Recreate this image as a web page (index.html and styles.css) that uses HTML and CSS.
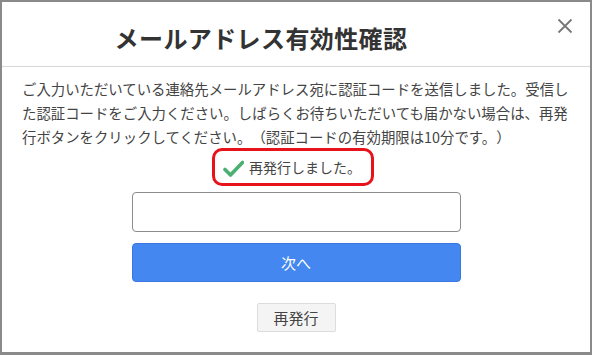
FILE: index.html
```html
<!DOCTYPE html>
<html lang="ja">
<head>
<meta charset="utf-8">
<link rel="stylesheet" href="styles.css">
</head>
<body>
<div class="dialog">
  <div class="header">
    <h1 class="title">メールアドレス有効性確認</h1>
    <span class="close">
      <svg width="16" height="16" viewBox="0 0 16 16"><path d="M1.5 1.5 L14.5 14.5 M14.5 1.5 L1.5 14.5" stroke="#777" stroke-width="1.8" fill="none"/></svg>
    </span>
  </div>
  <div class="body">
    <p class="desc">ご入力いただいている連絡先メールアドレス宛に認証コードを送信しました。受信した認証コードをご入力ください。しばらくお待ちいただいても届かない場合は、再発行ボタンをクリックしてください。（認証コードの有効期限は10分です。）</p>
    <div class="status-row">
      <div class="status">
        <svg class="check" width="21" height="17" viewBox="0 0 21 17"><path d="M2 9.5 L7.5 15 L19.5 2.5" stroke="#4caf72" stroke-width="3.6" fill="none" stroke-linecap="round" stroke-linejoin="round"/></svg>
        <span>再発行しました。</span>
      </div>
    </div>
    <div class="form">
      <input class="code" type="text">
      <button class="next">次へ</button>
      <button class="resend">再発行</button>
    </div>
  </div>
</div>
</body>
</html>
```

FILE: styles.css
```css
html, body {
  margin: 0;
  padding: 0;
  background: #fff;
}
body {
  font-family: "Noto Sans CJK JP", "Noto Sans", sans-serif;
  color: #333;
  text-spacing-trim: space-all;
}
.dialog {
  width: 592px;
  height: 355px;
  box-sizing: border-box;
  border: 2px solid #8a8a8a;
  border-bottom-width: 3px;
  display: flex;
  flex-direction: column;
}
.header {
  height: 64px;
  border-bottom: 1px solid #d8d8d8;
  display: flex;
  align-items: center;
  justify-content: center;
  position: relative;
}
.title {
  margin: 0 70px 0 0;
  font-size: 24px;
  font-weight: bold;
  color: #333;
  letter-spacing: 0.4px;
  padding-top: 6px;
}
.close {
  position: absolute;
  right: 17px;
  top: 16px;
  display: flex;
}
.body {
  padding: 10px 20px 0 20px;
  display: flex;
  flex-direction: column;
}
.desc {
  margin: 0;
  font-size: 14.4px;
  line-height: 24px;
  color: #444;
}
.status-row {
  display: flex;
  justify-content: center;
  margin-top: -1px;
  margin-left: -6px;
}
.status {
  display: flex;
  align-items: center;
  gap: 5px;
  border: 3px solid #e8121a;
  border-radius: 10px;
  padding: 0 10px 0 8px;
  height: 32px;
  font-size: 14px;
  color: #444;
}
.check {
  margin-top: 2px;
}
.form {
  display: flex;
  flex-direction: column;
  align-items: center;
  margin-top: 6px;
}
.code {
  width: 329px;
  height: 40px;
  box-sizing: border-box;
  border: 1px solid #8c8c8c;
  border-radius: 4px;
  margin: 0;
}
.next {
  width: 329px;
  height: 39px;
  margin-top: 11px;
  border: 1px solid #3a78e0;
  border-radius: 4px;
  background: #4487f0;
  color: #fff;
  font-family: inherit;
  font-size: 15px;
}
.resend {
  margin-top: 21px;
  height: 29px;
  width: 79px;
  background: #f4f4f4;
  border: 1px solid #dcdcdc;
  border-radius: 2px;
  font-family: inherit;
  font-size: 15px;
  color: #444;
}
```
